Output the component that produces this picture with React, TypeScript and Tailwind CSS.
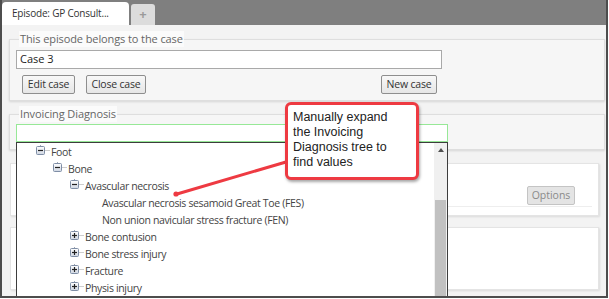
import React from "react";

type Node = { label: string; level: number; icon?: "minus" | "plus" };

const tree: Node[] = [
  { label: "Foot", level: 0, icon: "minus" },
  { label: "Bone", level: 1, icon: "minus" },
  { label: "Avascular necrosis", level: 2, icon: "minus" },
  { label: "Avascular necrosis sesamoid Great Toe (FES)", level: 3 },
  { label: "Non union navicular stress fracture (FEN)", level: 3 },
  { label: "Bone contusion", level: 2, icon: "plus" },
  { label: "Bone stress injury", level: 2, icon: "plus" },
  { label: "Fracture", level: 2, icon: "plus" },
  { label: "Physis injury", level: 2, icon: "plus" },
];

const indent = ["pl-[19px]", "pl-[36px]", "pl-[53px]", "pl-[70px]"];

function ToggleIcon({ kind }: { kind?: "minus" | "plus" }) {
  return (
    <svg width="15" height="12" viewBox="0 0 15 12" className="mt-[-3px] shrink-0">
      {kind && (
        <>
          <defs>
            <linearGradient id="tg" x1="0" y1="0" x2="0" y2="1">
              <stop offset="0" stopColor="#ffffff" />
              <stop offset="1" stopColor="#cfd6e2" />
            </linearGradient>
          </defs>
          <line x1="4.5" y1="0" x2="4.5" y2="1.5" stroke="#a0a8b4" strokeWidth="1" />
          <rect x="0.5" y="1.5" width="8" height="8" fill="url(#tg)" stroke="#7f8ea6" rx="1" />
          <line x1="2" y1="5.5" x2="7" y2="5.5" stroke="#222" strokeWidth="1.2" />
          {kind === "plus" && <line x1="4.5" y1="3" x2="4.5" y2="8" stroke="#222" strokeWidth="1.2" />}
          <line x1="9.5" y1="5.5" x2="14" y2="5.5" stroke="#9a9a9a" strokeWidth="1" strokeDasharray="1 1" />
        </>
      )}
    </svg>
  );
}

function Btn({ children, className = "" }: { children: React.ReactNode; className?: string }) {
  return (
    <button
      className={`h-[19px] rounded-[2px] border border-[#8e8e8e] bg-gradient-to-b from-[#f8f8f8] to-[#e6e6e6] text-[10.5px] leading-none tracking-[-0.2px] text-[#333] ${className}`}
    >
      {children}
    </button>
  );
}

export default function App() {
  return (
    <div className="h-[299px] w-[609px] bg-white font-['Open_Sans',sans-serif]">
      <div className="relative flex h-[298px] w-[608px] flex-col overflow-hidden border-x-2 border-b-2 border-[#4d4d4d]">
        {/* tab strip */}
        <div className="flex h-[25px] shrink-0 items-end gap-[2px] bg-[#7f7f7f]">
          <div className="flex h-[23px] w-[127px] items-center rounded-t-[4px] bg-white pl-[10px] text-[10px] tracking-[-0.2px] text-[#333]">
            Episode: GP Consult...
          </div>
          <div className="flex h-[21px] w-[24px] items-center justify-center rounded-t-[3px] bg-[#dcdcdc] text-[13px] font-bold text-[#9a9a9a]">
            +
          </div>
        </div>

        <div className="flex-1 bg-[#f3f3f3] pl-[7px] pr-[1px] pt-[6px]">
          <fieldset className="border border-[#dedede] bg-[#f6f6f6] px-[6px] pb-[6px] shadow-[0_1px_2px_rgba(0,0,0,0.12)]">
            <legend className="ml-[3px] bg-[#fbfbfb] px-[1px] text-[11px] leading-[16px] tracking-[-0.1px] text-[#666]">
              This episode belongs to the case
            </legend>
            <div className="mt-[3px] flex h-[19px] w-[426px] items-center border border-[#a9a9a9] bg-white pl-[3px] text-[11px] text-[#222]">
              Case 3
            </div>
            <div className="mt-[6px] flex w-[426px] pl-[6px] pr-[5px]">
              <Btn className="w-[53px]">Edit case</Btn>
              <Btn className="ml-[11px] w-[60px]">Close case</Btn>
              <Btn className="ml-auto w-[56px]">New case</Btn>
            </div>
          </fieldset>

          <fieldset className="mt-[5px] border border-[#dedede] bg-[#f6f6f6] px-[6px] pb-[7px] shadow-[0_1px_2px_rgba(0,0,0,0.12)]">
            <legend className="ml-[3px] bg-[#fbfbfb] px-[1px] text-[11px] leading-[16px] tracking-[-0.1px] text-[#666]">
              Invoicing Diagnosis
            </legend>
            <div className="relative mt-[2px] w-[432px]">
              <div className="h-[18px] border border-[#97e897] bg-white" />
              <div className="absolute left-0 top-full z-10 flex h-[160px] w-[432px] border border-[#3d3d3d] bg-white">
                <div className="flex-1 pt-[1px] text-[10.5px] tracking-[-0.35px] text-[#444]">
                  {tree.map((n) => (
                    <div key={n.label} className={`flex h-[17px] items-center ${indent[n.level]}`}>
                      <ToggleIcon kind={n.icon} />
                      <span className="whitespace-nowrap">{n.label}</span>
                    </div>
                  ))}
                </div>
                <div className="flex w-[13px] flex-col bg-[#f0f0f0]">
                  <div className="flex h-[14px] items-center justify-center">
                    <div className="h-0 w-0 border-x-[3px] border-b-[4px] border-x-transparent border-b-[#505050]" />
                  </div>
                  <div className="h-[43px]" />
                  <div className="mx-[1px] flex-1 bg-[#c1c1c1]" />
                </div>
              </div>
            </div>
          </fieldset>

          <div className="ml-[1px] mr-[6px] mt-[13px] h-[53px] border border-[#e4e4e4] bg-white shadow-[1px_1px_2px_rgba(0,0,0,0.1)]">
            <div className="mx-[6px] flex justify-end border-b border-[#eeeeee] pb-[1px] pt-[22px]">
              <button className="mr-[17px] h-[19px] w-[48px] rounded-[2px] border border-[#c4c4c4] bg-[#e4e4e4] text-[10.5px] leading-none text-[#8a8a8a]">
                Options
              </button>
            </div>
          </div>

          <div className="ml-[1px] mr-[6px] mt-[11px] h-[63px] border border-[#e4e4e4] bg-white shadow-[1px_1px_2px_rgba(0,0,0,0.1)]" />
        </div>

        {/* annotation */}
        <svg width="124" height="48" viewBox="0 0 124 48" className="absolute left-[166px] top-[155px] z-20">
          <line x1="118" y1="7" x2="9" y2="39" stroke="#ee3a42" strokeWidth="3" strokeLinecap="round" />
          <circle cx="8" cy="39" r="2.6" fill="#ee3a42" />
        </svg>
        <div className="absolute left-[283px] top-[102px] z-30 h-[78px] w-[134px] rounded-[6px] border-[3px] border-[#ee3a42] bg-white pl-[5px] pt-[5px] font-['Liberation_Sans',Arial,sans-serif] text-[12.5px] leading-[15px] text-[#222] shadow-[1px_2px_3px_rgba(0,0,0,0.35)]">
          <p className="w-[106px]">Manually expand the Invoicing Diagnosis tree to find values</p>
        </div>
      </div>
    </div>
  );
}
